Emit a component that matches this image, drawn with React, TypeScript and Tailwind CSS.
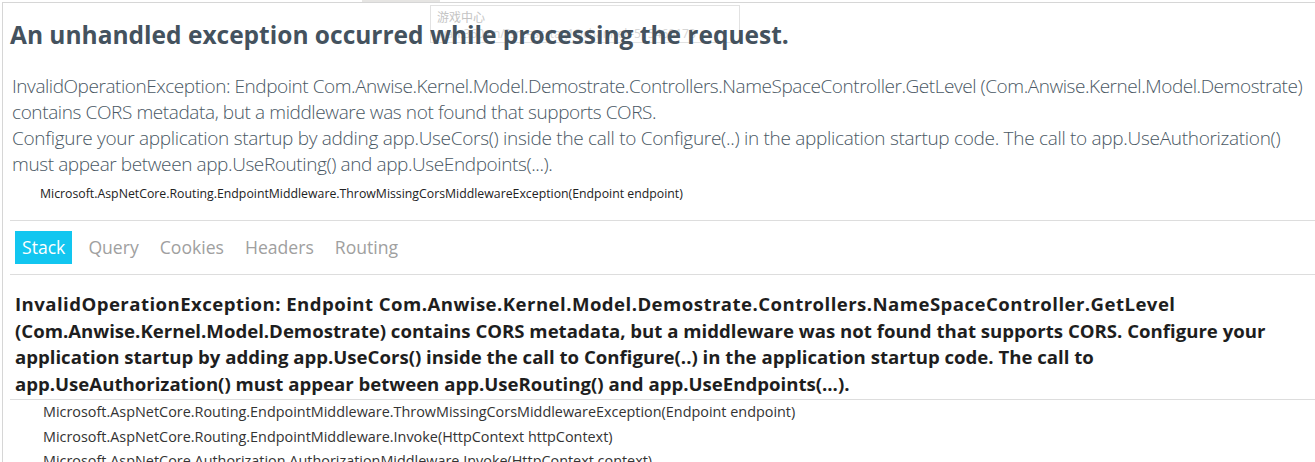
import React from 'react';

const tabs = ['Stack', 'Query', 'Cookies', 'Headers', 'Routing'];

const frames = [
    'Microsoft.AspNetCore.Routing.EndpointMiddleware.ThrowMissingCorsMiddlewareException(Endpoint endpoint)',
    'Microsoft.AspNetCore.Routing.EndpointMiddleware.Invoke(HttpContext httpContext)',
    'Microsoft.AspNetCore.Authorization.AuthorizationMiddleware.Invoke(HttpContext context)',
];

export default function App() {
    return (
        <div className="relative h-[462px] overflow-hidden bg-white pl-[2px] pt-[2px] [font-family:'Open_Sans','Noto_Sans',Arial,sans-serif]">
            {/* browser chrome leftovers */}
            <div className="absolute left-[362px] top-0 h-[2px] w-[78px] bg-[#e6e5e3]" />
            <div className="absolute left-[430px] top-[5px] z-0 h-[38px] w-[310px] border border-[#e2e2e2] bg-white/80 px-[6px] pt-[2px] text-[12px] leading-[17px] text-[#c4c4c4]">
                <div className="[font-family:'Noto_Sans_CJK_SC',sans-serif]">游戏中心</div>
                <div className="whitespace-nowrap text-[#d6d6d6]">wan.360.cn/?src=sc_tag1&amp;channel=515460173</div>
            </div>

            <div className="h-full border-l border-t border-[#d6d6d6] pl-[7px]">
                <h1 className="relative z-10 mt-[15px] whitespace-nowrap text-[24.5px] font-bold leading-[34px] text-[#44525e]">
                    An unhandled exception occurred while processing the request.
                </h1>

                <div className="mt-[21px] pl-[2px] text-[19px] font-light leading-[26px] tracking-[-0.4px] text-[#4a5864]">
                    <div className="whitespace-nowrap tracking-[-0.45px]">InvalidOperationException: Endpoint Com.Anwise.Kernel.Model.Demostrate.Controllers.NameSpaceController.GetLevel (Com.Anwise.Kernel.Model.Demostrate)</div>
                    <div className="whitespace-nowrap">contains CORS metadata, but a middleware was not found that supports CORS.</div>
                    <div className="whitespace-nowrap tracking-[-0.3px]">Configure your application startup by adding app.UseCors() inside the call to Configure(..) in the application startup code. The call to app.UseAuthorization()</div>
                    <div className="whitespace-nowrap">must appear between app.UseRouting() and app.UseEndpoints(...).</div>
                </div>

                <div className="ml-[30px] mt-[8px] whitespace-nowrap text-[12.3px] leading-[18px] text-[#222]">
                    Microsoft.AspNetCore.Routing.EndpointMiddleware.ThrowMissingCorsMiddlewareException(Endpoint endpoint)
                </div>

                <ul className="mt-[17px] flex gap-[11px] border-y border-[#dddddd] px-[5px] py-[10px] text-[17.6px] leading-[33px] text-[#a0a0a0]">
                    {tabs.map((t, i) => (
                        <li key={t} className={i === 0 ? 'bg-[#12c6f0] px-[7px] text-white' : 'px-[5px]'}>
                            {t}
                        </li>
                    ))}
                </ul>

                <div className="mt-[16px] border-b border-[#dddddd] px-[5px] pb-[2px] text-[18.6px] font-bold leading-[26.5px] text-[#1e1e1e]">
                    <div className="whitespace-nowrap tracking-[0.45px]">InvalidOperationException: Endpoint Com.Anwise.Kernel.Model.Demostrate.Controllers.NameSpaceController.GetLevel</div>
                    <div className="whitespace-nowrap">(Com.Anwise.Kernel.Model.Demostrate) contains CORS metadata, but a middleware was not found that supports CORS. Configure your</div>
                    <div className="whitespace-nowrap">application startup by adding app.UseCors() inside the call to Configure(..) in the application startup code. The call to</div>
                    <div className="whitespace-nowrap">app.UseAuthorization() must appear between app.UseRouting() and app.UseEndpoints(...).</div>
                </div>

                <ul className="ml-[33px] text-[14.4px] leading-[24.5px] text-[#333]">
                    {frames.map(f => (
                        <li key={f} className="whitespace-nowrap">{f}</li>
                    ))}
                </ul>
            </div>
        </div>
    );
}
